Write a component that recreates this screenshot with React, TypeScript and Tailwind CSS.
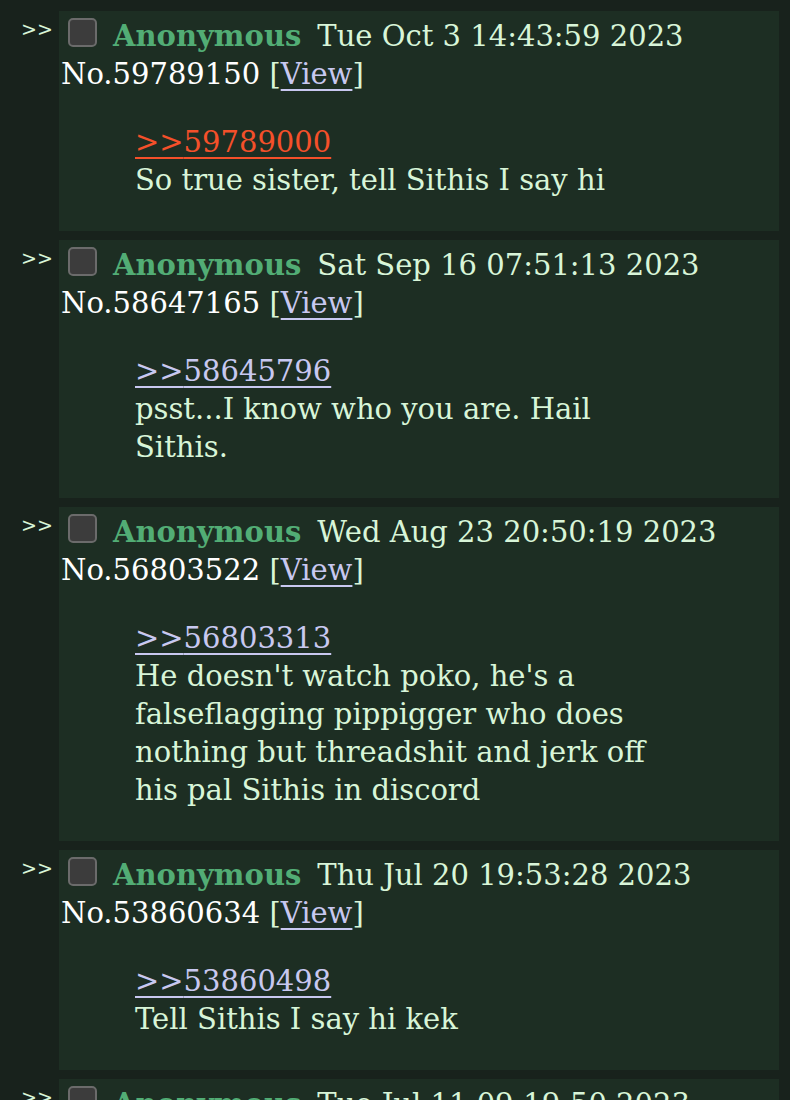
const posts = [
  {
    date: "Tue Oct 3 14:43:59 2023",
    no: "59789150",
    quote: "59789000",
    dead: true,
    body: "So true sister, tell Sithis I say hi",
  },
  {
    date: "Sat Sep 16 07:51:13 2023",
    no: "58647165",
    quote: "58645796",
    body: "psst...I know who you are. Hail Sithis.",
  },
  {
    date: "Wed Aug 23 20:50:19 2023",
    no: "56803522",
    quote: "56803313",
    body: "He doesn't watch poko, he's a falseflagging pippigger who does nothing but threadshit and jerk off his pal Sithis in discord",
  },
  {
    date: "Thu Jul 20 19:53:28 2023",
    no: "53860634",
    quote: "53860498",
    body: "Tell Sithis I say hi kek",
  },
  {
    date: "Tue Jul 11 09:19:50 2023",
    no: "52911204",
    quote: "52910877",
    body: "Sithis",
  },
];

function Post({ post }: { post: (typeof posts)[number] }) {
  return (
    <div className="flex">
      <div className="w-[59px] shrink-0 pl-[21px] pt-[6px] text-[19px] leading-[24px] text-[#d8f5d8] font-['DejaVu_Sans',sans-serif]">
        &gt;&gt;
      </div>
      <div className="w-[720px] bg-[#1d2e23] pl-[2px] pt-[6px] pb-[32px]">
        <div className="flex items-start">
          <span className="ml-[7px] mr-[16px] mt-[1px] h-[29px] w-[29px] shrink-0 rounded-[5px] border-2 border-[#6b6b6b] bg-[#3c3c3c]" />
          <span className="font-bold text-[#52ad75]">Anonymous</span>
          <span className="ml-[16px]">{post.date}</span>
        </div>
        <div>
          <span className="text-white">No.{post.no}</span>{" "}
          [<a className="text-[#c8c8f0] underline decoration-2 underline-offset-[5px]">View</a>]
        </div>
        <blockquote className="mt-[30px] ml-[74px] mr-[99px]">
          <a
            className={
              post.dead
                ? "text-[#f4502a] underline decoration-2 underline-offset-[5px]"
                : "text-[#c8c8f0] underline decoration-2 underline-offset-[5px]"
            }
          >
            &gt;&gt;{post.quote}
          </a>
          <div>{post.body}</div>
        </blockquote>
      </div>
    </div>
  );
}

export default function App() {
  return (
    <div className="h-[1100px] overflow-hidden bg-[#18221c] pt-[11px] text-[29px] leading-[38px] text-[#d8f5d8] font-['DejaVu_Serif',serif]">
      <div className="flex flex-col gap-[9px]">
        {posts.map((post) => (
          <Post key={post.no} post={post} />
        ))}
      </div>
    </div>
  );
}
